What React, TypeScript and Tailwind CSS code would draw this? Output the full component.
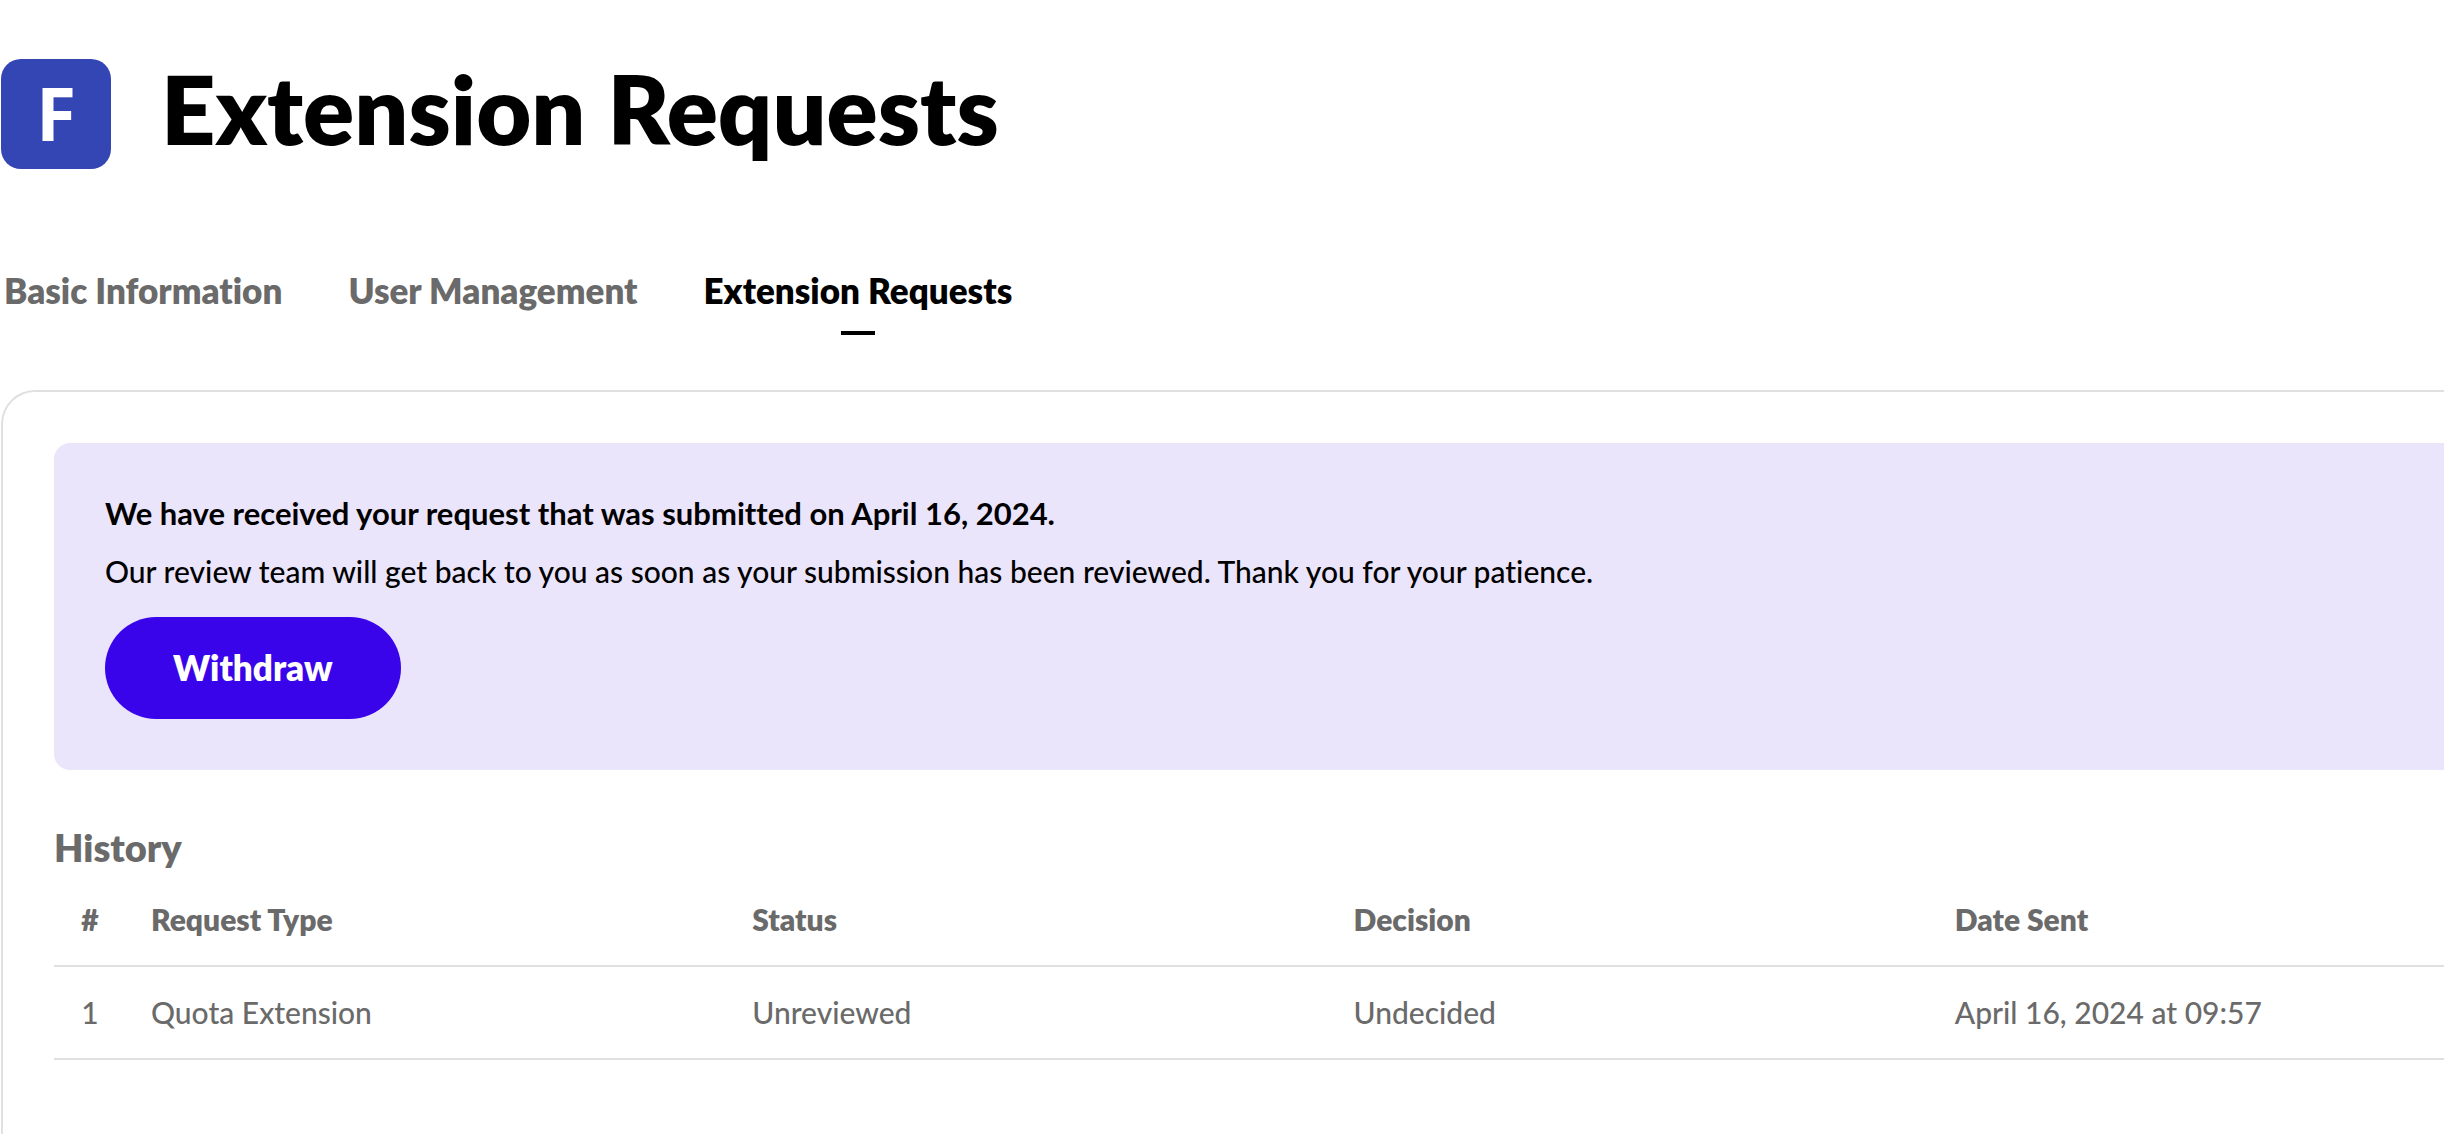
type HistoryEntry = {
  id: number;
  type: string;
  status: string;
  decision: string;
  sent: string;
};

const tabs = ['Basic Information', 'User Management', 'Extension Requests'];
const activeTab = 'Extension Requests';

const columns = ['Request Type', 'Status', 'Decision', 'Date Sent'];

const history: HistoryEntry[] = [
  {
    id: 1,
    type: 'Quota Extension',
    status: 'Unreviewed',
    decision: 'Undecided',
    sent: 'April 16, 2024 at 09:57',
  },
];

function Header() {
  return (
    <header className="flex items-start gap-[50px] pl-px">
      <div className="flex size-[110px] items-center justify-center rounded-[20px] bg-[#3445b4] pb-1 font-['Open_Sans',sans-serif] text-[73px] leading-none font-bold text-white">
        F
      </div>
      <h1 className="text-[95px] leading-[98px] font-extrabold">Extension Requests</h1>
    </header>
  );
}

function Tabs() {
  return (
    <nav className="mt-[97px] flex gap-[66px] pl-1">
      {tabs.map((tab) => (
        <a
          key={tab}
          href="#"
          aria-current={tab === activeTab ? 'page' : undefined}
          className="flex flex-col items-center gap-[17px] text-[35px] leading-[48px] font-extrabold text-[#6a6a6a] aria-[current=page]:text-black"
        >
          {tab}
          {tab === activeTab && <span className="h-1 w-[34px] bg-black" />}
        </a>
      ))}
    </nav>
  );
}

function Banner() {
  return (
    <section className="rounded-2xl bg-[#ebe5fc] px-[51px] pt-[41px] pb-[51px]">
      <p className="text-[31px] leading-[58px] font-bold">
        We have received your request that was submitted on April 16, 2024.
      </p>
      <p className="text-[30px] leading-[58px] font-medium">
        Our review team will get back to you as soon as your submission has been reviewed. Thank
        you for your patience.
      </p>
      <button
        type="button"
        className="mt-[17px] h-[102px] rounded-full bg-[#3a04ea] px-[68px] pb-0.5 text-[35px] font-extrabold text-white"
      >
        Withdraw
      </button>
    </section>
  );
}

function HistoryTable() {
  return (
    <table className="w-full table-fixed text-left text-[30px] leading-[40px] text-[#6a6a6a]">
      <thead>
        <tr className="border-b-2 border-[#e0e0e0]">
          <th scope="col" className="w-[72px] pt-[27px] pb-[26px] text-center font-extrabold">
            #
          </th>
          {columns.map((name) => (
            <th key={name} scope="col" className="px-[25px] pt-[27px] pb-[26px] font-extrabold">
              {name}
            </th>
          ))}
        </tr>
      </thead>
      <tbody>
        {history.map((entry) => (
          <tr key={entry.id} className="border-b-2 border-[#e0e0e0] font-medium">
            <td className="pt-[25px] pb-[26px] text-center">{entry.id}</td>
            <td className="px-[25px] pt-[25px] pb-[26px]">{entry.type}</td>
            <td className="px-[25px] pt-[25px] pb-[26px]">{entry.status}</td>
            <td className="px-[25px] pt-[25px] pb-[26px]">{entry.decision}</td>
            <td className="px-[25px] pt-[25px] pb-[26px]">{entry.sent}</td>
          </tr>
        ))}
      </tbody>
    </table>
  );
}

export default function App() {
  return (
    <div className="flex min-h-screen flex-col overflow-hidden bg-white pt-[59px] font-['Lato',sans-serif] text-black [font-variant-ligatures:none]">
      <Header />
      <Tabs />
      {/* The card is wider than the window and runs off its right and bottom edges. */}
      <main className="mt-[55px] -mr-[140px] ml-px grow rounded-t-[34px] border-2 border-b-0 border-[#e0e0e0] px-[51px] pt-[51px]">
        <Banner />
        <h2 className="mt-[52px] text-[38px] leading-[50px] font-extrabold text-[#6a6a6a]">History</h2>
        <HistoryTable />
      </main>
    </div>
  );
}
